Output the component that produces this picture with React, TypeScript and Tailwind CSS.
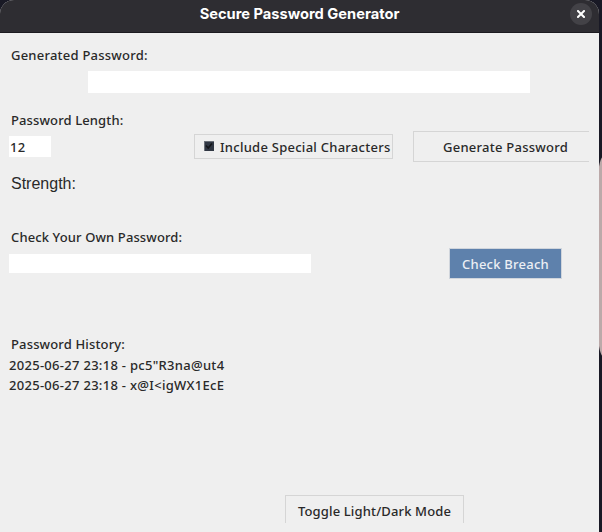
import React from "react";

const history = ['2025-06-27 23:18 - pc5"R3na@ut4', "2025-06-27 23:18 - x@I<igWX1EcE"];

function Label({ className, children }: { className: string; children: React.ReactNode }) {
  return <div className={`h-5 pl-[11px] leading-5 ${className}`}>{children}</div>;
}

function TitleBar() {
  return (
    <header className="relative flex h-[33px] items-center justify-center rounded-t-[14px] border-b border-[#1c1b20] bg-[#2e2d32] pb-[5px] font-['Inter'] text-[14.67px] font-bold text-white">
      <h1 className="whitespace-nowrap">Secure Password Generator</h1>
      <button aria-label="Close" className="absolute top-[3px] right-[7px] flex size-[22px] items-center justify-center rounded-full bg-[#434247]">
        <svg viewBox="0 0 8 8" className="size-2" stroke="white" strokeWidth="2" strokeLinecap="square">
          <path d="M1 1L7 7M7 1L1 7" />
        </svg>
      </button>
    </header>
  );
}

function Checkmark() {
  return (
    <svg viewBox="0 0 10 10" className="mb-px size-[10px] shrink-0 bg-[#303743]">
      <path d="M0 .5H10M.5 0V10" stroke="#6b7078" fill="none" />
      <path d="M2 4.5L4.2 7L8 2.5" stroke="#14161a" strokeWidth="1.6" fill="none" />
    </svg>
  );
}

export default function App() {
  return (
    <div className="relative h-[532px] w-[602px] overflow-hidden bg-[#191925] font-['Noto_Sans',sans-serif] text-[13px] font-medium whitespace-nowrap text-[#292929]">
      <div className="absolute top-[156px] left-[598px] h-[201px] w-[12px] rounded-[50%/12%] bg-[#bba9a9]" />
      <div className="relative h-full w-[599px] rounded-t-[14px] bg-[#efefef]">
        <TitleBar />
        <main className="flex flex-col">
          <Label className="mt-3 tracking-[0.23px]">Generated Password:</Label>
          <div className="mt-1.5 ml-[88px] h-[22px] w-[442px] bg-white" />
          <Label className="mt-[17px] tracking-[0.12px]">Password Length:</Label>
          <div className="mt-px flex h-[31px] items-center pl-[9px]">
            <div className="flex h-[21px] w-[42px] items-center bg-white pt-[2px] pl-px tracking-[0.3px]">12</div>
            <div className="ml-[143px] flex h-[25px] w-[199px] items-center border border-[#d5d5d5] pl-[9px]">
              <Checkmark />
              <span className="ml-[6px] pt-[2px] tracking-[0.26px]">Include Special Characters</span>
            </div>
            <button className="ml-5 flex h-[31px] w-[176px] items-center border border-r-0 border-[#d5d5d5] pt-[2px] pl-[29px] tracking-[0.25px]">Generate Password</button>
          </div>
          <Label className="mt-[11px] pt-px font-['Liberation_Sans'] text-[16px] font-normal">Strength:</Label>
          <Label className="mt-[34px] tracking-[0.12px]">Check Your Own Password:</Label>
          <div className="mt-px flex h-[31px] items-center pl-[9px]">
            <div className="h-[19px] w-[302px] bg-white" />
            <button className="ml-[138px] flex h-[31px] w-[113px] items-center border border-[#d0d5dc] bg-[#5e81ac] pt-[2px] pl-[12px] tracking-[0.24px] text-[#eceff4]">Check Breach</button>
          </div>
          <Label className="mt-[55px] tracking-[0.15px]">Password History:</Label>
          <ul className="pt-px pl-[9px] leading-5 tracking-[0.29px]">
            {history.map((entry) => <li key={entry}>{entry}</li>)}
          </ul>
          <button className="mt-[100px] ml-[285px] flex h-[28px] w-[179px] items-start border border-b-0 border-[#d5d5d5] pt-[5px] pl-[12px] leading-5 tracking-[0.14px]">Toggle Light/Dark Mode</button>
        </main>
      </div>
    </div>
  );
}
